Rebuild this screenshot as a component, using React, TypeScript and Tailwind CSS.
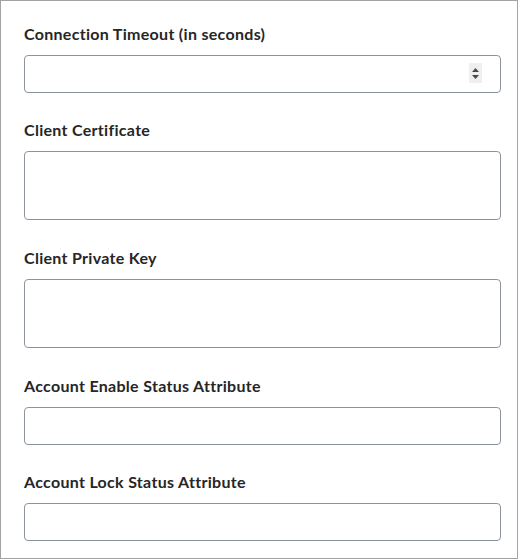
const fields = [
  { label: "Connection Timeout (in seconds)", kind: "number" },
  { label: "Client Certificate", kind: "textarea" },
  { label: "Client Private Key", kind: "textarea" },
  { label: "Account Enable Status Attribute", kind: "text" },
  { label: "Account Lock Status Attribute", kind: "text" },
];

const Spinner = () => (
  <div className="absolute right-[19px] top-[8px] flex h-[20px] w-[13px] flex-col items-center justify-center gap-[3px] bg-[#efefef]">
    <svg width="7" height="4" viewBox="0 0 7 4">
      <polygon points="3.5,0 7,4 0,4" fill="#4a4a4a" />
    </svg>
    <svg width="7" height="4" viewBox="0 0 7 4">
      <polygon points="0,0 7,0 3.5,4" fill="#4a4a4a" />
    </svg>
  </div>
);

export default function App() {
  return (
    <div
      className="box-border h-[559px] w-[518px] border border-[#a3a3a3] bg-white pl-[23px] pr-[16px] pt-[23px]"
      style={{ fontFamily: "Lato, 'Liberation Sans', sans-serif" }}
    >
      {fields.map((f) => (
        <div key={f.label} className={f.kind === "textarea" ? "mb-[28px]" : "mb-[27px]"}>
          <label className="mb-[11px] block text-[16px] font-bold leading-[20px] tracking-[0.3px] text-[#262626]">
            {f.label}
          </label>
          {f.kind === "textarea" ? (
            <textarea className="box-border block h-[69px] w-full resize-none rounded-[4px] border border-[#8d949c] bg-white outline-none" />
          ) : (
            <div className="relative">
              <input
                type="text"
                className="box-border block h-[38px] w-full rounded-[4px] border border-[#8d949c] bg-white outline-none"
              />
              {f.kind === "number" && <Spinner />}
            </div>
          )}
        </div>
      ))}
    </div>
  );
}
